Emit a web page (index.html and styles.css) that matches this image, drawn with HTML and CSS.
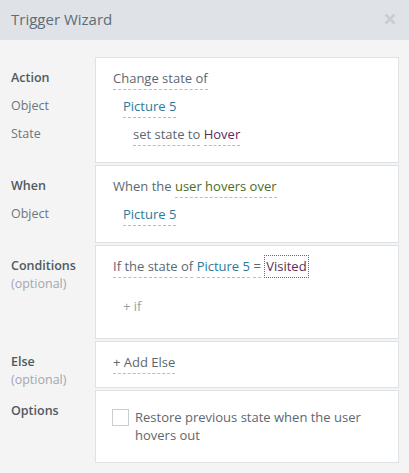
FILE: index.html
```html
<!DOCTYPE html>
<html>
<head>
<meta charset="utf-8">
<link rel="stylesheet" href="styles.css">
</head>
<body>
<div class="dialog">
  <div class="header">
    <span class="title">Trigger Wizard</span>
    <svg class="close" width="12" height="12" viewBox="0 0 12 12"><path d="M1.5 1.5 L10.5 10.5 M10.5 1.5 L1.5 10.5" stroke="#c8cdd2" stroke-width="2.6" fill="none"/></svg>
  </div>
  <div class="content">
    <div class="section">
      <div class="labels">
        <div class="lbl strong">Action</div>
        <div class="lbl">Object</div>
        <div class="lbl">State</div>
      </div>
      <div class="card">
        <div class="row"><span class="dash plain">Change state of</span></div>
        <div class="row ind1"><span class="dash link">Picture 5</span></div>
        <div class="row ind2"><span class="dash plain">set state to</span> <span class="dash state">Hover</span></div>
      </div>
    </div>
    <div class="section">
      <div class="labels">
        <div class="lbl strong">When</div>
        <div class="lbl">Object</div>
      </div>
      <div class="card">
        <div class="row"><span class="plain">When the</span> <span class="dash event">user hovers over</span></div>
        <div class="row ind1"><span class="dash link">Picture 5</span></div>
      </div>
    </div>
    <div class="section">
      <div class="labels">
        <div class="lbl strong">Conditions</div>
        <div class="opt">(optional)</div>
      </div>
      <div class="card card-cond">
        <div class="row"><span class="dash plain">If the state of</span> <span class="dash link">Picture 5</span> <span class="dash plain">=</span> <span class="boxed state">Visited</span></div>
        <div class="row addif"><span class="muted">+ if</span></div>
      </div>
    </div>
    <div class="section">
      <div class="labels">
        <div class="lbl strong">Else</div>
        <div class="opt">(optional)</div>
      </div>
      <div class="card card-else">
        <div class="row"><span class="dash plain">+ Add Else</span></div>
      </div>
    </div>
    <div class="section">
      <div class="labels">
        <div class="lbl strong">Options</div>
      </div>
      <div class="card card-opt">
        <label class="option">
          <span class="check"></span>
          <span class="opttext">Restore previous state when the user hovers out</span>
        </label>
      </div>
    </div>
  </div>
</div>
</body>
</html>
```
FILE: styles.css
```css
html, body {
  margin: 0;
  padding: 0;
  background: #f4f4f4;
}
body {
  font-family: "Open Sans", "Noto Sans", sans-serif;
  font-size: 13px;
  color: #5c6870;
  width: 409px;
  height: 473px;
  overflow: hidden;
}
.header {
  height: 40px;
  background: #dfe3e7;
  display: flex;
  align-items: center;
  justify-content: space-between;
  padding: 0 13px 0 11px;
}
.title {
  font-size: 15px;
  color: #5f6c75;
  padding-bottom: 2px;
}
.close {
  display: block;
  margin-bottom: 2px;
}
.content {
  padding: 17px 10px 0 0;
  display: flex;
  flex-direction: column;
  gap: 2px;
}
.section {
  display: grid;
  grid-template-columns: 95px 304px;
}
.labels {
  padding: 7px 0 0 11px;
}
.lbl {
  height: 28px;
  line-height: 28px;
  color: #6b767e;
  font-size: 12.5px;
}
.lbl.strong {
  font-weight: 600;
  color: #4e5a62;
}
.opt {
  color: #a2a8ad;
  font-size: 12.5px;
  line-height: 14px;
  margin-top: -3px;
}
.card {
  background: #fff;
  border: 1px solid #dde2e6;
  padding: 6px 17px 14px 17px;
}
.row {
  height: 28px;
  line-height: 28px;
  white-space: nowrap;
}
.ind1 { padding-left: 10px; }
.ind2 { padding-left: 20px; }
.dash {
  border-bottom: 1px dashed #b8bdc1;
  padding-bottom: 2px;
}
.plain { color: #5c6870; }
.link { color: #2a7a9c; }
.state { color: #5b2b5a; }
.event { color: #4a6b1f; }
.boxed {
  border: 1px dotted #6a6a6a;
  padding: 1px 1px 2px 1px;
}
.card-cond { padding-bottom: 18px; }
.addif { margin-top: 12px; padding-left: 10px; }
.muted { color: #9aa0a5; }
.card-else { padding-bottom: 11px; }
.card-opt {
  padding: 18px 17px 18px 16px;
}
.option {
  display: flex;
  align-items: flex-start;
  gap: 6px;
}
.check {
  flex: none;
  width: 15px;
  height: 15px;
  border: 1px solid #c9ced2;
  background: #fff;
}
.opttext {
  line-height: 18px;
  margin-top: -1px;
  color: #5c6870;
  width: 250px;
}
```
